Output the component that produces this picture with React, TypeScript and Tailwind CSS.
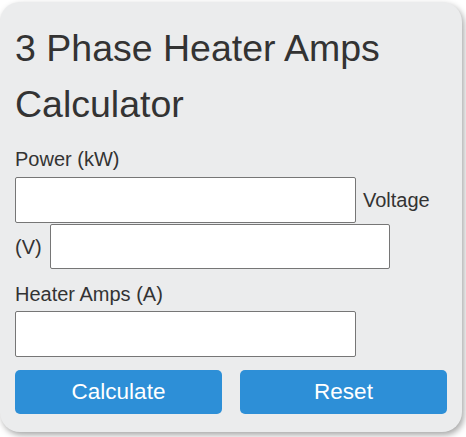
export default function App() {
  return (
    <div className="min-h-screen bg-white pt-[2px] font-['Liberation_Sans',Arial,sans-serif] text-[#333]">
      <div className="h-[430px] w-[462px] rounded-[20px] bg-[#ebeced] pl-[15px] pt-[18px] shadow-[2px_3px_6px_rgba(0,0,0,0.35)]">
        <h1 className="text-[37.5px] font-normal leading-[56.25px]">3 Phase Heater Amps Calculator</h1>

        <div className="mt-[11.5px] text-[20px] leading-[30px]">Power (kW)</div>
        <div className="mt-[3px] flex items-center text-[20px]">
          <input type="text" className="h-[46px] w-[341px] rounded-[2px] border border-[#767676] bg-white" />
          <span className="ml-[7px]">Voltage</span>
        </div>
        <div className="mt-[1px] flex items-center text-[20px]">
          <span>(V)</span>
          <input type="text" className="ml-[8px] h-[45px] w-[340px] rounded-[2px] border border-[#767676] bg-white" />
        </div>

        <div className="mt-[9.5px] text-[20px] leading-[30px]">Heater Amps (A)</div>
        <input type="text" className="mt-[2.5px] block h-[46px] w-[341px] rounded-[2px] border border-[#767676] bg-white" />

        <div className="mt-[12.5px] flex gap-[18px]">
          <button className="h-[44px] w-[207px] rounded-[5px] bg-[#2d8fd7] text-[22.5px] text-white">Calculate</button>
          <button className="h-[44px] w-[207px] rounded-[5px] bg-[#2d8fd7] text-[22.5px] text-white">Reset</button>
        </div>
      </div>
    </div>
  );
}
